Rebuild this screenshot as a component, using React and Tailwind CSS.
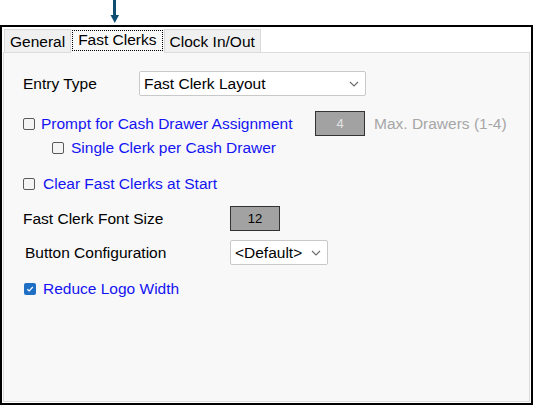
import React from 'react';

const font = "font-['Liberation_Sans',Arial,sans-serif]";

function Chevron() {
   return (
      <svg width="10" height="6" viewBox="0 0 10 6" className="shrink-0">
         <path d="M1 1 L5 5 L9 1" fill="none" stroke="#6b6b6b" strokeWidth="1.1" />
      </svg>
   );
}

function Check({ checked }) {
   if (checked) {
      return (
         <span className="w-[12px] h-[12px] rounded-[2px] bg-[#1f6fc4] flex items-center justify-center shrink-0">
            <svg width="8" height="8" viewBox="0 0 8 8">
               <path d="M1.3 4.2 L3.2 6 L6.8 2" fill="none" stroke="#fff" strokeWidth="1.2" />
            </svg>
         </span>
      );
   }
   return <span className="w-[12px] h-[12px] rounded-[2px] border border-[#5a5a5a] bg-[#f4f4f4] shrink-0" />;
}

function Select({ value, width }) {
   return (
      <div className={`${width} h-[25px] bg-white border border-[#c9c9c9] rounded-[2px] flex items-center justify-between pl-[4px] pr-[6px]`}>
         <span>{value}</span>
         <Chevron />
      </div>
   );
}

function NumBox({ value, light }) {
   return (
      <div
         className={`w-[50px] h-[25px] bg-[#a2a2a2] border border-[#333] flex items-center justify-center text-[13px] ${
            light ? 'text-[#e2e2e2]' : 'text-black'
         }`}
      >
         {value}
      </div>
   );
}

export default function App() {
   const tabs = ['General', 'Fast Clerks', 'Clock In/Out'];
   const active = 1;

   return (
      <div className={`w-[534px] h-[406px] bg-white relative text-[15.5px] text-black ${font}`}>
         {/* pointer above the active tab */}
         <svg className="absolute left-[110px] top-0" width="10" height="24" viewBox="0 0 10 24">
            <rect x="3" y="0" width="3" height="16" fill="#0f4e70" />
            <path d="M0.5 15 L9 15 L4.75 23 Z" fill="#0f4e70" />
         </svg>

         <div className="absolute left-0 top-[25px] w-[533px] h-[380px] border-2 border-black flex flex-col pl-[1px] pr-[1px] pb-[1px]">
            <div className="h-[25px] flex items-end pl-[1px]">
               {tabs.map((tab, i) =>
                  i === active ? (
                     <div key={tab} className="h-[24px] -mb-px relative z-10 bg-[#f8f8f8] px-[1px] pt-[1px] pb-[2px]">
                        <div className="h-full border border-dotted border-black flex items-center px-[5px] pb-[2px]">
                           {tab}
                        </div>
                     </div>
                  ) : (
                     <div
                        key={tab}
                        className="h-[23px] border border-b-0 border-[#dadada] bg-[#f0f0f0] flex items-center px-[5px] pt-[2px]"
                     >
                        {tab}
                     </div>
                  )
               )}
            </div>

            <div className="flex-1 border border-[#dcdcdc] bg-[#f8f8f8] flex flex-col pt-[18px] pl-[19px]">
               <div className="h-[25px] flex items-center">
                  <span className="w-[116px]">Entry Type</span>
                  <Select value="Fast Clerk Layout" width="w-[227px]" />
               </div>

               <div className="h-[25px] mt-[15px] flex items-center">
                  <Check />
                  <span className="ml-[6px] w-[274px] text-[#1414f2]">Prompt for Cash Drawer Assignment</span>
                  <NumBox value="4" light />
                  <span className="ml-[9px] text-[#a6a6a6]">Max. Drawers (1-4)</span>
               </div>

               <div className="h-[20px] mt-[2px] flex items-center pl-[29px]">
                  <Check />
                  <span className="ml-[7px] text-[#1414f2]">Single Clerk per Cash Drawer</span>
               </div>

               <div className="h-[20px] mt-[16px] flex items-center">
                  <Check />
                  <span className="ml-[8px] text-[#1414f2]">Clear Fast Clerks at Start</span>
               </div>

               <div className="h-[25px] mt-[12px] flex items-center">
                  <span className="w-[207px]">Fast Clerk Font Size</span>
                  <NumBox value="12" />
               </div>

               <div className="h-[25px] mt-[9px] flex items-center">
                  <span className="w-[205px] ml-[2px]">Button Configuration</span>
                  <Select value="<Default>" width="w-[98px]" />
               </div>

               <div className="h-[20px] mt-[14px] flex items-center pl-[1px]">
                  <Check checked />
                  <span className="ml-[7px] text-[#1414f2]">Reduce Logo Width</span>
               </div>
            </div>
         </div>
      </div>
   );
}
